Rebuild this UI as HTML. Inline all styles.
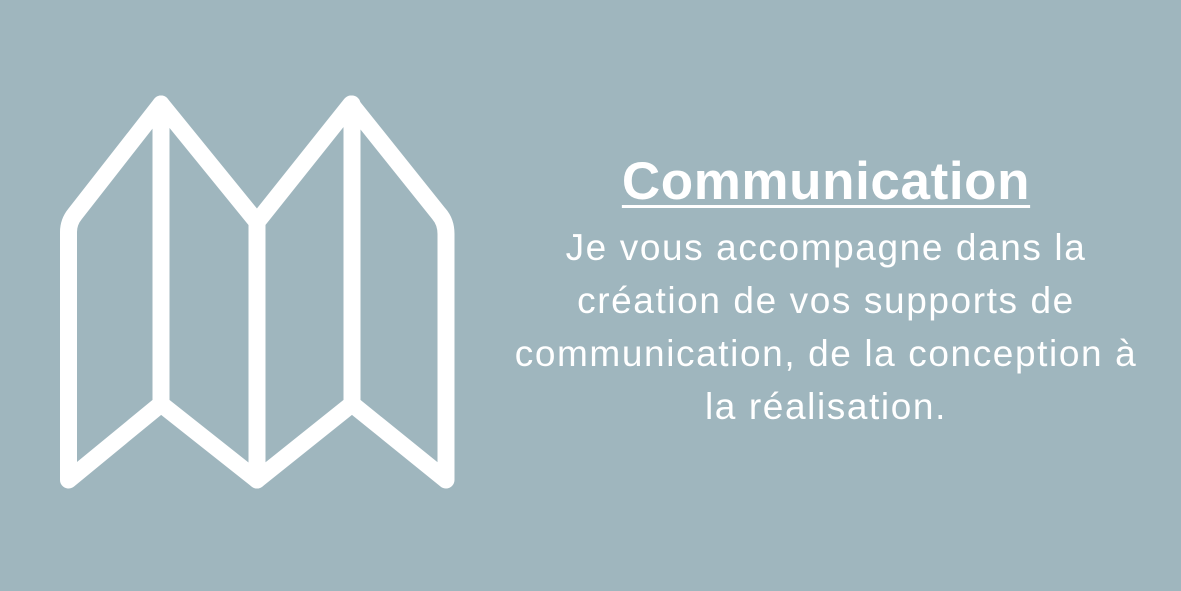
<!DOCTYPE html>
<html><head><meta charset="utf-8"><style>
html,body{margin:0;padding:0;}
body{width:1181px;height:591px;background:#9fb6be;position:relative;overflow:hidden;font-family:"Liberation Sans",sans-serif;color:#fff;}
svg{position:absolute;left:0;top:0;}
h1{position:absolute;left:450px;width:752px;top:152px;margin:0;text-align:center;font-size:53px;font-weight:bold;line-height:60px;letter-spacing:0.6px;}
h1 span{text-decoration:underline;text-decoration-thickness:3px;text-underline-offset:6px;}
p{position:absolute;left:430px;width:792px;top:221px;margin:0;text-align:center;font-size:37px;line-height:53px;letter-spacing:1.6px;}
</style></head><body>
<svg width="1181" height="591" viewBox="0 0 1181 591">
<g fill="none" stroke="#fff" stroke-width="17" stroke-linejoin="round" stroke-linecap="round">
<path d="M68.5 480 L68.5 232 Q68.5 222 75 214 L161 104 L257 222 L351 104 L439 214 Q446 222 446 234 L446 480 L352 404 L257 480 L161 404 Z"/>
<path d="M161 104 L161 404 M257 222 L257 480 M352 104 L352 404"/>
</g>
</svg>
<h1><span>Communication</span></h1>
<p>Je vous accompagne dans la<br>création de vos supports de<br>communication, de la conception à<br>la réalisation.</p>
</body></html>
